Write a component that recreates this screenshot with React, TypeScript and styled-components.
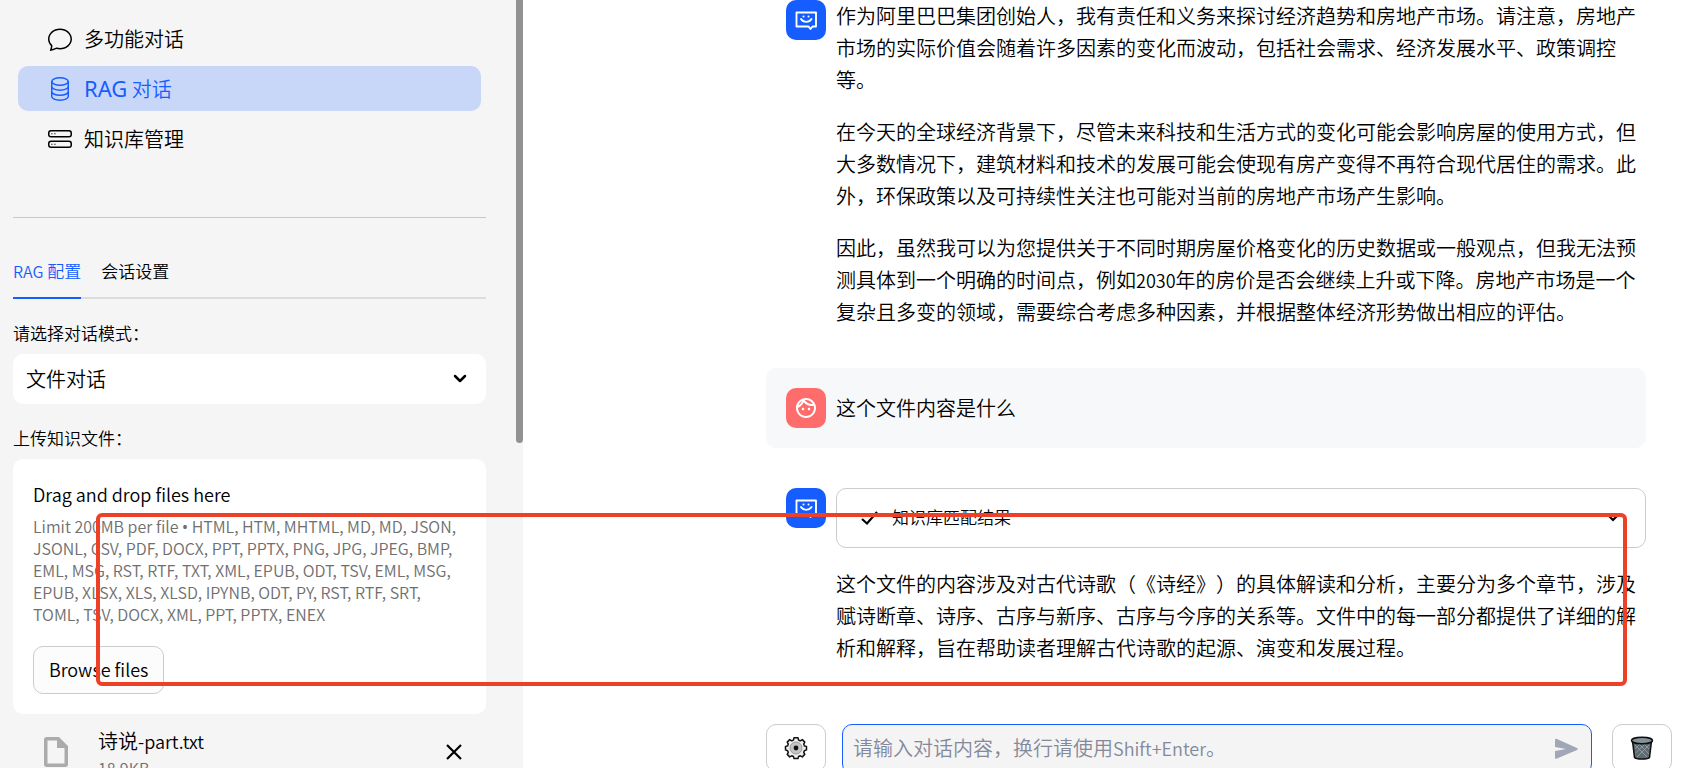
import React, { useState } from "react";
import styled, { createGlobalStyle, css } from "styled-components";

const GlobalStyle = createGlobalStyle`
  * { box-sizing: border-box; }
  body {
    margin: 0;
    background: #ffffff;
    color: #000000;
    font-family: "Noto Sans CJK SC", "Noto Sans", sans-serif;
    font-size: 20px;
    font-weight: 350;
    text-spacing-trim: space-all;
    overflow: hidden;
  }
  button, input, select, textarea { font: inherit; color: inherit; }
  p, h1, h2 { margin: 0; font-weight: inherit; }
`;

const Page = styled.div`
  position: relative;
  display: flex;
  height: 100vh;
  overflow: hidden;
`;

const Sidebar = styled.aside`
  display: flex;
  flex: 0 0 523px;
  justify-content: space-between;
  background: #f5f5f5;
  overflow: hidden;
`;

const SidebarContent = styled.div`
  flex: 1;
  min-width: 0;
  padding: 16px 30px 0 13px;
`;

const ScrollThumb = styled.div`
  flex: 0 0 7px;
  height: 443px;
  border-radius: 0 0 4px 4px;
  background: #929292;
`;

const Nav = styled.nav`
  display: flex;
  flex-direction: column;
  gap: 5px;
  padding: 0 5px;
`;

const NavLink = styled.a<{ $active?: boolean }>`
  display: flex;
  align-items: center;
  gap: 12px;
  height: 45px;
  padding: 0 30px;
  border-radius: 10px;
  color: ${(p) => (p.$active ? "#165dff" : "#000000")};
  background: ${(p) => (p.$active ? "#c8d6f8" : "transparent")};
  text-decoration: none;
  svg { width: 24px; height: 24px; }
`;

const Divider = styled.hr`
  height: 1px;
  margin: 56px 0 36px;
  border: 0;
  background: #c8c8c8;
`;

const Tabs = styled.div`
  display: flex;
  gap: 20px;
  height: 45px;
  border-bottom: 2px solid #dcdcdc;
  font-size: 17px;
`;

const Tab = styled.button<{ $active?: boolean }>`
  height: 45px;
  padding: 0 0 10px;
  border: 0;
  border-bottom: 2px solid ${(p) => (p.$active ? "#165dff" : "transparent")};
  background: none;
  color: ${(p) => (p.$active ? "#165dff" : "#000000")};
`;

const Latin = styled.span`
  font-size: ${(p: { $size?: number }) => p.$size ?? 18}px;
  line-height: 1;
`;

const Humanist = styled.span<{ $size?: number }>`
  font-family: "Noto Sans", "Open Sans", sans-serif;
  font-size: ${(p) => p.$size ?? 16}px;
  font-weight: 400;
  line-height: 1;
`;

const FieldLabel = styled.label`
  display: block;
  margin-top: 22px;
  font-size: 17px;
  line-height: 24px;
`;

const SelectWrap = styled.div`
  position: relative;
  margin-top: 9px;
  svg {
    position: absolute;
    right: 16px;
    top: 15px;
    width: 20px;
    height: 20px;
    pointer-events: none;
  }
`;

const Select = styled.select`
  display: block;
  width: 100%;
  height: 50px;
  padding: 0 13px 2px;
  border: 0;
  border-radius: 10px;
  background: #ffffff;
  appearance: none;
`;

const Dropzone = styled.section`
  margin-top: 9px;
  padding: 20px;
  border-radius: 10px;
  background: #ffffff;
`;

const DropTitle = styled.h2`
  font-size: 18px;
  line-height: 30px;
`;

const DropHint = styled.p`
  margin-top: 6px;
  font-size: 16px;
  line-height: 22px;
  color: #6f6f6f;
`;

const outlined = css`
  border: 1px solid #cccccc;
  border-radius: 10px;
  background: #fcfcfc;
`;

const BrowseButton = styled.button`
  ${outlined}
  height: 48px;
  margin-top: 21px;
  padding: 0 15px 2px;
  font-size: 18px;
`;

const FileRow = styled.div`
  display: flex;
  align-items: flex-start;
  padding: 11px 20px 0 31px;
`;

const FileIcon = styled.svg`
  width: 24px;
  height: 30px;
  margin-top: 12px;
`;

const FileInfo = styled.div`
  flex: 1;
  margin-left: 30px;
`;

const FileName = styled.div`
  line-height: 32px;
`;

const FileSize = styled.div`
  font-size: 16px;
  line-height: 22px;
  color: #6f6f6f;
`;

const RemoveButton = styled.button`
  display: flex;
  margin-top: 15px;
  padding: 0;
  border: 0;
  background: none;
  svg { width: 24px; height: 24px; }
`;

const Main = styled.main`
  display: flex;
  flex: 1;
  min-width: 0;
  flex-direction: column;
  padding: 0 25px 0 243px;
`;

const Thread = styled.div`
  display: flex;
  flex-direction: column;
  gap: 40px;
  margin-right: 26px;
`;

const Message = styled.article<{ $user?: boolean }>`
  display: flex;
  gap: 10px;
  padding: ${(p) => (p.$user ? "20px" : "0 0 0 20px")};
  border-radius: 10px;
  background: ${(p) => (p.$user ? "#f7f8fa" : "transparent")};
`;

const Avatar = styled.div<{ $user?: boolean }>`
  display: flex;
  flex: 0 0 40px;
  align-items: center;
  justify-content: center;
  height: 40px;
  border-radius: 10px;
  background: ${(p) => (p.$user ? "#ff6c6c" : "#165dff")};
  svg { width: 24px; height: 24px; }
`;

const MessageBody = styled.div<{ $user?: boolean }>`
  display: flex;
  flex: 1;
  min-width: 0;
  flex-direction: column;
  gap: 20px;
  line-height: 32px;
  padding-top: ${(p) => (p.$user ? "4px" : "0")};
`;

const Expander = styled.button`
  display: flex;
  align-items: center;
  height: 60px;
  padding: 0 22px 2px 21px;
  border: 1px solid #cccccc;
  border-radius: 10px;
  background: #ffffff;
  font-size: 17px;
`;

const ExpanderLabel = styled.span`
  flex: 1;
  margin-left: 12px;
  text-align: left;
`;

const Composer = styled.form`
  display: flex;
  align-items: flex-start;
  margin-top: 60px;
`;

const IconButton = styled.button`
  ${outlined}
  display: flex;
  flex: 0 0 60px;
  align-items: center;
  justify-content: center;
  height: 48px;
  padding: 0;
  background: #ffffff;
  svg { width: 24px; height: 24px; }
`;

const ChatField = styled.div`
  position: relative;
  display: flex;
  flex: 1;
  align-items: center;
  height: 50px;
  margin: 0 20px 0 16px;
  padding: 0 10px;
  border: 1px solid #165dff;
  border-radius: 10px;
  background: #f4f4f4;
`;

const ChatHint = styled.label`
  position: absolute;
  left: 10px;
  top: 7px;
  line-height: 32px;
  color: #84889a;
  pointer-events: none;
`;

const ChatInput = styled.input`
  flex: 1;
  min-width: 0;
  padding: 0;
  border: 0;
  outline: 0;
  background: none;
`;

const SendButton = styled.button`
  display: flex;
  padding: 0;
  border: 0;
  background: none;
  svg { width: 30px; height: 30px; }
`;

const Highlight = styled.div`
  position: absolute;
  top: 513px;
  left: 96px;
  right: 70px;
  height: 173px;
  border: 4px solid #ee4026;
  border-radius: 6px;
  pointer-events: none;
`;

const ChatDots = () => (
  <svg viewBox="0 0 16 16" fill="currentColor" aria-hidden="true">
    <path d="M2.678 11.894a1 1 0 0 1 .287.801 11 11 0 0 1-.398 2c1.395-.323 2.247-.697 2.634-.893a1 1 0 0 1 .71-.074A8 8 0 0 0 8 14c3.996 0 7-2.807 7-6s-3.004-6-7-6-7 2.808-7 6c0 1.468.617 2.83 1.678 3.894m-.493 3.905a22 22 0 0 1-.713.129c-.2.032-.352-.176-.273-.362a10 10 0 0 0 .244-.637l.003-.01c.248-.72.45-1.548.524-2.319C.743 11.37 0 9.76 0 8c0-3.866 3.582-7 8-7s8 3.134 8 7-3.582 7-8 7a9 9 0 0 1-2.347-.306c-.52.263-1.639.742-3.468 1.105" />
  </svg>
);

const DatabaseIcon = () => (
  <svg viewBox="0 0 16 16" fill="none" stroke="currentColor" aria-hidden="true">
    <ellipse cx="8" cy="3" rx="5.5" ry="2.5" />
    <path d="M2.5 3v10c0 1.400 2.500 2.500 5.500 2.500s5.500-1.100 5.500-2.500V3M2.500 6.300c0 1.400 2.500 2.500 5.500 2.500s5.500-1.100 5.500-2.500M2.500 9.700c0 1.400 2.500 2.500 5.500 2.500s5.500-1.100 5.500-2.500" />
  </svg>
);

const StackIcon = () => (
  <svg viewBox="0 0 16 16" fill="none" stroke="currentColor" aria-hidden="true">
    <rect x=".5" y="2.500" width="15" height="4" rx="1.500" />
    <rect x=".5" y="9.500" width="15" height="4" rx="1.500" />
    <path d="M2.200 4.500h.8M4.200 4.500h.8M2.200 11.500h.8M4.200 11.500h.8" strokeWidth=".8" />
  </svg>
);

const ChevronDown = () => (
  <svg viewBox="0 0 20 20" fill="none" stroke="currentColor" strokeWidth="2.500" strokeLinecap="round" strokeLinejoin="round" aria-hidden="true">
    <path d="M5 7l5 5 5-5" />
  </svg>
);

const BotIcon = () => (
  <svg viewBox="0 0 24 24" fill="none" stroke="#ffffff" strokeWidth="1.900" aria-hidden="true">
    <path d="M2.500 4.500h19.500v14h-3.500l-2 2.500-2-2.500H2.500z" strokeLinejoin="round" />
    <path d="M7 11c2.500 3.800 8 3.800 10.500 0" strokeLinecap="round" />
    <circle cx="9.500" cy="8.500" r="1" fill="#ffffff" stroke="none" />
    <circle cx="14.500" cy="8.500" r="1" fill="#ffffff" stroke="none" />
  </svg>
);

const FaceIcon = () => (
  <svg viewBox="0 0 24 24" fill="#ffffff" aria-hidden="true">
    <path d="M10.250 13c0 .69-.56 1.250-1.250 1.250S7.750 13.690 7.750 13s.56-1.250 1.250-1.250 1.250.56 1.250 1.250zM15 11.750c-.69 0-1.250.56-1.250 1.250s.56 1.250 1.250 1.250 1.250-.56 1.250-1.250-.56-1.250-1.250-1.250zm7 .25c0 5.520-4.480 10-10 10S2 17.520 2 12 6.480 2 12 2s10 4.480 10 10zM10.660 4.120C12.060 6.440 14.600 8 17.500 8c.46 0 .91-.05 1.340-.12C17.440 5.560 14.900 4 12 4c-.46 0-.91.05-1.340.12zM4.420 9.470c1.710-.97 3.030-2.550 3.660-4.440C6.370 6 5.050 7.580 4.420 9.470zM20 12c0-.78-.12-1.530-.33-2.240-.7.15-1.420.24-2.170.24-3.130 0-5.920-1.440-7.760-3.690C8.690 8.870 6.600 10.880 4 11.860c.01.04 0 .09 0 .14 0 4.410 3.590 8 8 8s8-3.590 8-8z" />
  </svg>
);

const GearIcon = () => (
  <svg viewBox="0 0 24 24" aria-hidden="true">
    <path d="M10 1.800h4l.6 2.300 1.700.7 2-1.200 2.500 2.500-1.100 2 .7 1.800 2.100.6v3.400l-2.100.8-.7 1.700 1.100 2-2.500 2.500-2-1.100-1.700.7-.6 2h-4l-.6-2-1.700-.7-2 1.100-2.500-2.500 1.100-2-.7-1.700-2.100-.8v-3.400l2.100-.6.7-1.800-1.100-2 2.500-2.500 2 1.200 1.700-.7z" fill="#eeeeee" stroke="#111111" strokeWidth="1.500" strokeLinejoin="round" />
    <circle cx="12" cy="12" r="6" fill="#c4c4c4" stroke="#999999" />
    <circle cx="12" cy="12" r="2.400" fill="#111111" />
  </svg>
);

const TrashIcon = () => (
  <svg viewBox="0 0 24 24" aria-hidden="true">
    <path d="M2.500 5l2 16.500c1.500 2 13.500 2 15 0l2-16.500z" fill="#5f6b72" stroke="#0d0d0d" strokeWidth="1.500" />
    <path d="M5 9l12 12M9 8l10 10M14 8l5 5M19 9L7 21M15 8L5.500 17M10 8l-5 5" stroke="#98a4aa" strokeWidth=".8" />
    <ellipse cx="12" cy="4.500" rx="10.500" ry="3.200" fill="#84929a" stroke="#0d0d0d" strokeWidth="1.500" />
  </svg>
);

const SIDE_LINKS = [
  { label: "多功能对话", icon: <ChatDots /> },
  { label: <><Humanist $size={22}>RAG</Humanist> 对话</>, icon: <DatabaseIcon />, active: true },
  { label: "知识库管理", icon: <StackIcon /> },
];

export default function App() {
  const [draft, setDraft] = useState("");
  return (
    <Page>
      <GlobalStyle />
      <Sidebar>
        <SidebarContent>
          <Nav>
            {SIDE_LINKS.map((l, i) => (
              <NavLink key={i} href="#" $active={l.active}>
                {l.icon}
                <span>{l.label}</span>
              </NavLink>
            ))}
          </Nav>
          <Divider />
          <Tabs role="tablist">
            <Tab role="tab" aria-selected="true" $active><Latin $size={16}>RAG</Latin> 配置</Tab>
            <Tab role="tab" aria-selected="false">会话设置</Tab>
          </Tabs>
          <FieldLabel htmlFor="mode">请选择对话模式：</FieldLabel>
          <SelectWrap>
            <Select id="mode" defaultValue="file">
              <option value="file">文件对话</option>
            </Select>
            <ChevronDown />
          </SelectWrap>
          <FieldLabel as="div">上传知识文件：</FieldLabel>
          <Dropzone>
            <DropTitle>Drag and drop files here</DropTitle>
            <DropHint>
              Limit 200MB per file <Humanist>•</Humanist> HTML, HTM, MHTML, MD, MD, JSON, JSONL, CSV, PDF, DOCX, PPT, PPTX,
              PNG, JPG, JPEG, BMP, EML, MSG, RST, RTF, TXT, XML, EPUB, ODT, TSV, EML, MSG, EPUB, XLSX,
              XLS, XLSD, IPYNB, ODT, PY, RST, RTF, SRT, TOML, TSV, DOCX, XML, PPT, PPTX, ENEX
            </DropHint>
            <BrowseButton type="button">Browse files</BrowseButton>
          </Dropzone>
          <FileRow>
            <FileIcon viewBox="0 0 24 30" fill="#ababab" aria-hidden="true">
              <path fillRule="evenodd" d="M15 0H3C1 0 0 1 0 3v24c0 2 1 3 3 3h18c2 0 3-1 3-3V9zM3.500 26.500v-23H13V11h7.500v15.500z" />
            </FileIcon>
            <FileInfo>
              <FileName>诗说<Latin>-part.txt</Latin></FileName>
              <FileSize>18.9KB</FileSize>
            </FileInfo>
            <RemoveButton type="button" aria-label="Remove file">
              <svg viewBox="0 0 24 24" stroke="#000000" strokeWidth="2.200" aria-hidden="true">
                <path d="M5 5l14 14M19 5L5 19" />
              </svg>
            </RemoveButton>
          </FileRow>
        </SidebarContent>
        <ScrollThumb />
      </Sidebar>
      <Main>
        <Thread>
          <Message>
            <Avatar><BotIcon /></Avatar>
            <MessageBody>
              <p>作为阿里巴巴集团创始人，我有责任和义务来探讨经济趋势和房地产市场。请注意，房地产市场的实际价值会随着许多因素的变化而波动，包括社会需求、经济发展水平、政策调控等。</p>
              <p>在今天的全球经济背景下，尽管未来科技和生活方式的变化可能会影响房屋的使用方式，但大多数情况下，建筑材料和技术的发展可能会使现有房产变得不再符合现代居住的需求。此外，环保政策以及可持续性关注也可能对当前的房地产市场产生影响。</p>
              <p>因此，虽然我可以为您提供关于不同时期房屋价格变化的历史数据或一般观点，但我无法预测具体到一个明确的时间点，例如<Latin>2030</Latin>年的房价是否会继续上升或下降。房地产市场是一个复杂且多变的领域，需要综合考虑多种因素，并根据整体经济形势做出相应的评估。</p>
            </MessageBody>
          </Message>
          <Message $user>
            <Avatar $user><FaceIcon /></Avatar>
            <MessageBody $user>
              <p>这个文件内容是什么</p>
            </MessageBody>
          </Message>
          <Message>
            <Avatar><BotIcon /></Avatar>
            <MessageBody>
              <Expander type="button" aria-expanded="false">
                <svg width="22" height="22" viewBox="0 0 22 22" fill="none" stroke="#000000" strokeWidth="2.200" aria-hidden="true">
                  <path d="M4 13l5 4.500L19 6" />
                </svg>
                <ExpanderLabel>知识库匹配结果</ExpanderLabel>
                <svg width="20" height="20" viewBox="0 0 20 20" fill="none" stroke="#000000" strokeWidth="2.200" strokeLinecap="round" aria-hidden="true">
                  <path d="M6 9l4 4 4-4" />
                </svg>
              </Expander>
              <p>这个文件的内容涉及对古代诗歌（《诗经》）的具体解读和分析，主要分为多个章节，涉及赋诗断章、诗序、古序与新序、古序与今序的关系等。文件中的每一部分都提供了详细的解析和解释，旨在帮助读者理解古代诗歌的起源、演变和发展过程。</p>
            </MessageBody>
          </Message>
        </Thread>
        <Composer>
          <IconButton type="button" aria-label="设置"><GearIcon /></IconButton>
          <ChatField>
            {draft === "" && (
              <ChatHint htmlFor="chat">请输入对话内容，换行请使用<Latin>Shift+Enter</Latin>。</ChatHint>
            )}
            <ChatInput id="chat" value={draft} onChange={(e) => setDraft(e.target.value)} />
            <SendButton type="button" aria-label="发送">
              <svg viewBox="0 0 30 30" fill="#a2a7b8" aria-hidden="true">
                <path d="M4 6v7l11 2-11 2v7c0 1 1 1 2 .5l20-8.500c1-.5 1-1.500 0-2L6 5c-1-.5-2 0-2 1z" />
              </svg>
            </SendButton>
          </ChatField>
          <IconButton type="button" aria-label="清空"><TrashIcon /></IconButton>
        </Composer>
      </Main>
      <Highlight />
    </Page>
  );
}
